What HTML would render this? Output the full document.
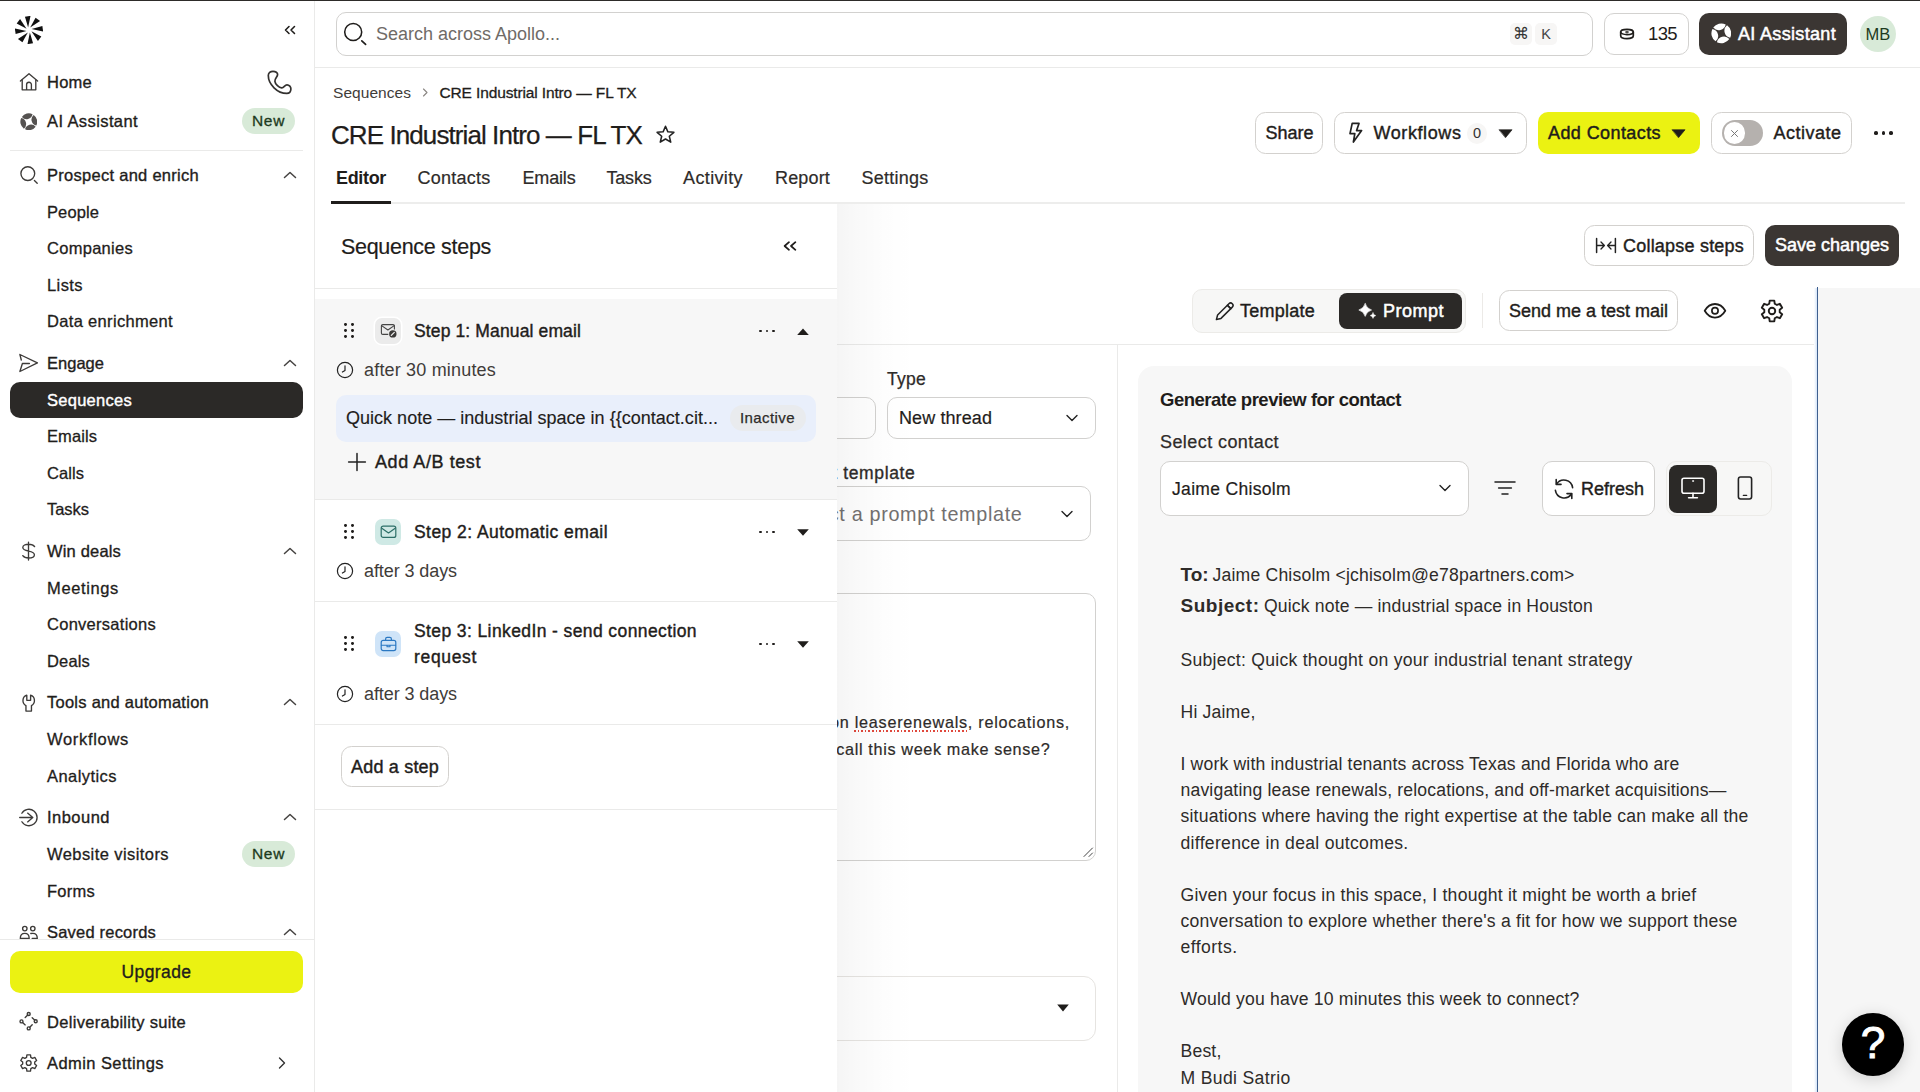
<!DOCTYPE html>
<html lang="en"><head><meta charset="utf-8"><title>CRE Industrial Intro — FL TX - Apollo</title><style>
*{box-sizing:border-box;margin:0;padding:0}
html,body{width:1920px;height:1092px;overflow:hidden;background:#fff}
body{position:relative;font-family:"Liberation Sans",sans-serif;color:#1f1d1b;-webkit-font-smoothing:antialiased}
div,svg,span.t{position:absolute}
span.t{white-space:nowrap;display:block}
</style></head>
<body>
<div style="left:0px;top:0px;width:1920px;height:1.4px;background:#2d2b29;z-index:50"></div>
<div style="left:0px;top:0px;width:314.7px;height:1092px;background:#fff;border-right:1px solid #eaeae9"></div>
<div style="left:314px;top:67px;width:1606px;height:1px;background:#eaeae9"></div>
<svg style="left:14.7px;top:16px;" width="28" height="28" viewBox="0 0 28 28" fill="none" stroke="#1f1d1b" stroke-width="1.5" stroke-linecap="round" stroke-linejoin="round"><path d="M13.3 11.4 L10.9 0.4 L16.5 0 Z" transform="rotate(-4 14 14)" fill="#111" stroke="none"/><path d="M13.3 11.4 L10.9 0.4 L16.5 0 Z" transform="rotate(41 14 14)" fill="#111" stroke="none"/><path d="M13.3 11.4 L10.9 0.4 L16.5 0 Z" transform="rotate(86 14 14)" fill="#111" stroke="none"/><path d="M13.3 11.4 L10.9 0.4 L16.5 0 Z" transform="rotate(131 14 14)" fill="#111" stroke="none"/><path d="M13.3 11.4 L10.9 0.4 L16.5 0 Z" transform="rotate(176 14 14)" fill="#111" stroke="none"/><path d="M13.3 11.4 L10.9 0.4 L16.5 0 Z" transform="rotate(221 14 14)" fill="#111" stroke="none"/><path d="M13.3 11.4 L10.9 0.4 L16.5 0 Z" transform="rotate(266 14 14)" fill="#111" stroke="none"/><path d="M13.3 11.4 L10.9 0.4 L16.5 0 Z" transform="rotate(311 14 14)" fill="#111" stroke="none"/></svg>
<svg style="left:283px;top:24px;" width="14" height="12" viewBox="0 0 14 12" fill="none" stroke="#1f1d1b" stroke-width="1.5" stroke-linecap="round" stroke-linejoin="round"><path d="M6 2.5 L2.5 6 L6 9.5 M11.5 2.5 L8 6 L11.5 9.5" stroke-width="1.55"/></svg>
<svg style="left:19px;top:72px;" width="20" height="20" viewBox="0 0 20 20" fill="none" stroke="#1f1d1b" stroke-width="1.5" stroke-linecap="round" stroke-linejoin="round"><path d="M1.4 9 L10 1.8 L18.6 9" stroke="#3d3b39" stroke-width="1.35"/><path d="M3.2 8 V17.8 H16.8 V8" stroke="#3d3b39" stroke-width="1.35"/><path d="M7.6 17.4 V12.6 a2.4 2.4 0 0 1 4.8 0 V17.4" stroke="#3d3b39" stroke-width="1.35"/></svg>
<span class="t" id="t1" style="top:71.1px;line-height:23px;font-size:16.5px;font-weight:400;color:#1f1d1b;left:47px;letter-spacing:0.246px;-webkit-text-stroke:0.35px #1f1d1b;">Home</span>
<svg style="left:266px;top:70px;" width="26" height="26" viewBox="0 0 26 26" fill="none" stroke="#1f1d1b" stroke-width="1.5" stroke-linecap="round" stroke-linejoin="round"><path d="M7 1.3 C9.6 1.3 11.8 2.8 11.6 4.7 C11.4 7 8.6 8.6 8.9 11.3 C9.3 14.5 13 17.7 15.7 17.9 C18 18.1 18.6 14.8 21 14.8 C23.2 14.8 25 17 24.9 19 C24.8 21.6 23.4 23.4 20.8 23.4 C11.4 23.4 2.3 14.4 2.3 5.6 C2.3 3 4.4 1.3 7 1.3 Z" stroke="#33312f" stroke-width="1.7"/></svg>
<svg style="left:19.9px;top:112.7px;" width="17.6" height="17.6" viewBox="0 0 20 20" fill="none" stroke="#1f1d1b" stroke-width="1.5" stroke-linecap="round" stroke-linejoin="round"><path d="M15.57 2.18 A9.6 9.6 0 0 1 18.59 14.28 A6.9 6.9 0 0 1 15.57 2.18 Z M17.82 15.57 A9.6 9.6 0 0 1 5.72 18.59 A6.9 6.9 0 0 1 17.82 15.57 Z M4.43 17.82 A9.6 9.6 0 0 1 1.41 5.72 A6.9 6.9 0 0 1 4.43 17.82 Z M2.18 4.43 A9.6 9.6 0 0 1 14.28 1.41 A6.9 6.9 0 0 1 2.18 4.43 Z " fill="#555250" stroke="none"/></svg>
<span class="t" id="t2" style="top:110.1px;line-height:23px;font-size:16.5px;font-weight:400;color:#1f1d1b;left:47px;letter-spacing:0.399px;-webkit-text-stroke:0.35px #1f1d1b;">AI Assistant</span>
<div style="left:242px;top:108px;width:53px;height:26px;background:#d8ead8;border-radius:13px"></div>
<span class="t" id="t3" style="top:110.0px;line-height:22px;font-size:15.5px;font-weight:400;color:#1d3a20;left:268.5px;transform:translateX(-50%);letter-spacing:0.661px;-webkit-text-stroke:0.3px #1d3a20;">New</span>
<div style="left:10px;top:150.2px;width:293px;height:1.2px;background:#eaeae9"></div>
<svg style="left:19px;top:165px;" width="20" height="20" viewBox="0 0 20 20" fill="none" stroke="#1f1d1b" stroke-width="1.5" stroke-linecap="round" stroke-linejoin="round"><circle cx="8.8" cy="8.6" r="6.9" stroke="#3d3b39" stroke-width="1.35"/><path d="M15.4 15.4 L18.2 18.2" stroke="#3d3b39" stroke-width="1.35"/></svg>
<span class="t" id="t4" style="top:164.1px;line-height:23px;font-size:16.5px;font-weight:400;color:#1f1d1b;left:47px;letter-spacing:0.276px;-webkit-text-stroke:0.35px #1f1d1b;">Prospect and enrich</span>
<svg style="left:283px;top:170.7px;" width="14" height="8" viewBox="0 0 14 8" fill="none" stroke="#1f1d1b" stroke-width="1.5" stroke-linecap="round" stroke-linejoin="round"><path d="M1.5 6.5 L7 1.5 L12.5 6.5" stroke-width="1.5" stroke="#454341"/></svg>
<span class="t" id="t5" style="top:200.6px;line-height:23px;font-size:16.5px;font-weight:400;color:#1f1d1b;left:47px;letter-spacing:0.102px;-webkit-text-stroke:0.3px #1f1d1b;">People</span>
<span class="t" id="t6" style="top:237.1px;line-height:23px;font-size:16.5px;font-weight:400;color:#1f1d1b;left:47px;letter-spacing:0.281px;-webkit-text-stroke:0.3px #1f1d1b;">Companies</span>
<span class="t" id="t7" style="top:273.6px;line-height:23px;font-size:16.5px;font-weight:400;color:#1f1d1b;left:47px;letter-spacing:0.412px;-webkit-text-stroke:0.3px #1f1d1b;">Lists</span>
<span class="t" id="t8" style="top:310.1px;line-height:23px;font-size:16.5px;font-weight:400;color:#1f1d1b;left:47px;letter-spacing:0.329px;-webkit-text-stroke:0.3px #1f1d1b;">Data enrichment</span>
<svg style="left:19px;top:353px;" width="20" height="20" viewBox="0 0 20 20" fill="none" stroke="#1f1d1b" stroke-width="1.5" stroke-linecap="round" stroke-linejoin="round"><path d="M2.3 7 L0.9 1.5 L18.4 9.9 L0.9 18.5 L3.4 10.5 H10.4" stroke="#3d3b39" stroke-width="1.35"/></svg>
<span class="t" id="t9" style="top:352.1px;line-height:23px;font-size:16.5px;font-weight:400;color:#1f1d1b;left:47px;letter-spacing:0.018px;-webkit-text-stroke:0.35px #1f1d1b;">Engage</span>
<svg style="left:283px;top:358.7px;" width="14" height="8" viewBox="0 0 14 8" fill="none" stroke="#1f1d1b" stroke-width="1.5" stroke-linecap="round" stroke-linejoin="round"><path d="M1.5 6.5 L7 1.5 L12.5 6.5" stroke-width="1.5" stroke="#454341"/></svg>
<div style="left:10px;top:381.5px;width:293px;height:36px;background:#2b2927;border-radius:10px"></div>
<span class="t" id="t10" style="top:388.6px;line-height:23px;font-size:16.5px;font-weight:400;color:#fff;left:47px;letter-spacing:0.269px;-webkit-text-stroke:0.4px #fff;">Sequences</span>
<span class="t" id="t11" style="top:425.1px;line-height:23px;font-size:16.5px;font-weight:400;color:#1f1d1b;left:47px;letter-spacing:0.081px;-webkit-text-stroke:0.3px #1f1d1b;">Emails</span>
<span class="t" id="t12" style="top:461.6px;line-height:23px;font-size:16.5px;font-weight:400;color:#1f1d1b;left:47px;letter-spacing:0.065px;-webkit-text-stroke:0.3px #1f1d1b;">Calls</span>
<span class="t" id="t13" style="top:498.1px;line-height:23px;font-size:16.5px;font-weight:400;color:#1f1d1b;left:47px;letter-spacing:-0.037px;-webkit-text-stroke:0.3px #1f1d1b;">Tasks</span>
<svg style="left:19px;top:541px;" width="20" height="20" viewBox="0 0 20 20" fill="none" stroke="#1f1d1b" stroke-width="1.5" stroke-linecap="round" stroke-linejoin="round"><path d="M15.6 5.6 C14.4 3.8 12.2 3.2 9.6 3.2 C6.5 3.2 3.8 4.3 3.8 6.5 C3.8 8.9 6.7 9.5 9.6 10.1 C12.5 10.7 15.4 11.3 15.4 13.7 C15.4 15.9 12.7 17 9.6 17 C7.4 17 5 16.4 3.8 14.6 M9.5 1.2 V19" stroke="#3d3b39" stroke-width="1.35"/></svg>
<span class="t" id="t14" style="top:540.1px;line-height:23px;font-size:16.5px;font-weight:400;color:#1f1d1b;left:47px;letter-spacing:0.172px;-webkit-text-stroke:0.35px #1f1d1b;">Win deals</span>
<svg style="left:283px;top:546.7px;" width="14" height="8" viewBox="0 0 14 8" fill="none" stroke="#1f1d1b" stroke-width="1.5" stroke-linecap="round" stroke-linejoin="round"><path d="M1.5 6.5 L7 1.5 L12.5 6.5" stroke-width="1.5" stroke="#454341"/></svg>
<span class="t" id="t15" style="top:576.6px;line-height:23px;font-size:16.5px;font-weight:400;color:#1f1d1b;left:47px;letter-spacing:0.631px;-webkit-text-stroke:0.3px #1f1d1b;">Meetings</span>
<span class="t" id="t16" style="top:613.1px;line-height:23px;font-size:16.5px;font-weight:400;color:#1f1d1b;left:47px;letter-spacing:0.271px;-webkit-text-stroke:0.3px #1f1d1b;">Conversations</span>
<span class="t" id="t17" style="top:649.6px;line-height:23px;font-size:16.5px;font-weight:400;color:#1f1d1b;left:47px;letter-spacing:0.163px;-webkit-text-stroke:0.3px #1f1d1b;">Deals</span>
<svg style="left:19px;top:692px;" width="20" height="20" viewBox="0 0 20 20" fill="none" stroke="#1f1d1b" stroke-width="1.5" stroke-linecap="round" stroke-linejoin="round"><path d="M11.6 3.2 A5.7 5.7 0 0 1 12.45 13.6 V19.1 H6.95 V13.6 A5.7 5.7 0 0 1 7.8 3.2 V8.3 H11.6 Z" stroke="#3d3b39" stroke-width="1.35"/></svg>
<span class="t" id="t18" style="top:691.1px;line-height:23px;font-size:16.5px;font-weight:400;color:#1f1d1b;left:47px;letter-spacing:0.257px;-webkit-text-stroke:0.35px #1f1d1b;">Tools and automation</span>
<svg style="left:283px;top:697.7px;" width="14" height="8" viewBox="0 0 14 8" fill="none" stroke="#1f1d1b" stroke-width="1.5" stroke-linecap="round" stroke-linejoin="round"><path d="M1.5 6.5 L7 1.5 L12.5 6.5" stroke-width="1.5" stroke="#454341"/></svg>
<span class="t" id="t19" style="top:728.1px;line-height:23px;font-size:16.5px;font-weight:400;color:#1f1d1b;left:47px;letter-spacing:0.689px;-webkit-text-stroke:0.3px #1f1d1b;">Workflows</span>
<span class="t" id="t20" style="top:764.6px;line-height:23px;font-size:16.5px;font-weight:400;color:#1f1d1b;left:47px;letter-spacing:0.441px;-webkit-text-stroke:0.3px #1f1d1b;">Analytics</span>
<svg style="left:19px;top:807px;" width="20" height="20" viewBox="0 0 20 20" fill="none" stroke="#1f1d1b" stroke-width="1.5" stroke-linecap="round" stroke-linejoin="round"><path d="M2.87 6.25 A8.2 8.2 0 1 1 2.87 14.75 M0.7 10.5 H13.6 M8.6 6.1 L13.8 10.5 L8.6 14.9" stroke="#3d3b39" stroke-width="1.35"/></svg>
<span class="t" id="t21" style="top:806.1px;line-height:23px;font-size:16.5px;font-weight:400;color:#1f1d1b;left:47px;letter-spacing:0.478px;-webkit-text-stroke:0.35px #1f1d1b;">Inbound</span>
<svg style="left:283px;top:812.7px;" width="14" height="8" viewBox="0 0 14 8" fill="none" stroke="#1f1d1b" stroke-width="1.5" stroke-linecap="round" stroke-linejoin="round"><path d="M1.5 6.5 L7 1.5 L12.5 6.5" stroke-width="1.5" stroke="#454341"/></svg>
<span class="t" id="t22" style="top:843.1px;line-height:23px;font-size:16.5px;font-weight:400;color:#1f1d1b;left:47px;letter-spacing:0.423px;-webkit-text-stroke:0.3px #1f1d1b;">Website visitors</span>
<div style="left:242px;top:841px;width:53px;height:26px;background:#d8ead8;border-radius:13px"></div>
<span class="t" id="t23" style="top:843.0px;line-height:22px;font-size:15.5px;font-weight:400;color:#1d3a20;left:268.5px;transform:translateX(-50%);letter-spacing:0.661px;-webkit-text-stroke:0.3px #1d3a20;">New</span>
<span class="t" id="t24" style="top:879.6px;line-height:23px;font-size:16.5px;font-weight:400;color:#1f1d1b;left:47px;letter-spacing:0.250px;-webkit-text-stroke:0.3px #1f1d1b;">Forms</span>
<svg style="left:19px;top:922px;" width="20" height="20" viewBox="0 0 20 20" fill="none" stroke="#1f1d1b" stroke-width="1.5" stroke-linecap="round" stroke-linejoin="round"><circle cx="5.8" cy="6.6" r="2.2" stroke="#3d3b39" stroke-width="1.35"/><circle cx="13.8" cy="6.6" r="2.2" stroke="#3d3b39" stroke-width="1.35"/><path d="M1.3 16.4 C1.3 13.4 3 11.3 5.8 11.3 C8.6 11.3 10.2 13.4 10.2 16.4 Z M11.8 11.5 C12.4 11.3 13 11.3 13.8 11.3 C16.6 11.3 18.3 13.4 18.3 16.4 H13.2" stroke="#3d3b39" stroke-width="1.35"/></svg>
<span class="t" id="t25" style="top:921.1px;line-height:23px;font-size:16.5px;font-weight:400;color:#1f1d1b;left:47px;letter-spacing:0.200px;-webkit-text-stroke:0.35px #1f1d1b;">Saved records</span>
<svg style="left:283px;top:927.7px;" width="14" height="8" viewBox="0 0 14 8" fill="none" stroke="#1f1d1b" stroke-width="1.5" stroke-linecap="round" stroke-linejoin="round"><path d="M1.5 6.5 L7 1.5 L12.5 6.5" stroke-width="1.5" stroke="#454341"/></svg>
<div style="left:0px;top:939px;width:313.7px;height:153px;background:#fff;border-top:1px solid #eaeae9"></div>
<div style="left:10px;top:951px;width:293px;height:42px;background:#ebf212;border-radius:10px"></div>
<span class="t" id="t26" style="top:960.0px;line-height:24px;font-size:17.5px;font-weight:400;color:#1f1d1b;left:156.5px;transform:translateX(-50%);letter-spacing:0.408px;-webkit-text-stroke:0.35px #1f1d1b;">Upgrade</span>
<svg style="left:19px;top:1011px;" width="20" height="20" viewBox="0 0 20 20" fill="none" stroke="#1f1d1b" stroke-width="1.5" stroke-linecap="round" stroke-linejoin="round"><circle cx="9.7" cy="3" r="1.5" stroke="#3d3b39" stroke-width="1.35"/><circle cx="16.7" cy="10.2" r="1.5" stroke="#3d3b39" stroke-width="1.35"/><circle cx="9.7" cy="17.4" r="1.5" stroke="#3d3b39" stroke-width="1.35"/><circle cx="2.5" cy="10.4" r="1.5" stroke="#3d3b39" stroke-width="1.35"/><path d="M8.7 4.1 L6.2 6.6 M15.6 9.1 L13.2 6.8 M10.8 16.3 L13.2 13.8 M3.6 11.5 L6.2 13.9" stroke="#3d3b39" stroke-width="1.35"/></svg>
<span class="t" id="t27" style="top:1010.6px;line-height:23px;font-size:16.5px;font-weight:400;color:#1f1d1b;left:47px;letter-spacing:0.301px;-webkit-text-stroke:0.35px #1f1d1b;">Deliverability suite</span>
<svg style="left:19px;top:1053px;" width="20" height="20" viewBox="0 0 20 20" fill="none" stroke="#1f1d1b" stroke-width="1.5" stroke-linecap="round" stroke-linejoin="round"><path d="M11.84 4.29 L11.50 1.90 L7.90 1.90 L7.56 4.29 L5.82 5.29 L3.58 4.39 L1.78 7.50 L3.68 8.99 L3.68 11.01 L1.78 12.50 L3.58 15.61 L5.82 14.71 L7.56 15.71 L7.90 18.10 L11.50 18.10 L11.84 15.71 L13.58 14.71 L15.82 15.61 L17.62 12.50 L15.72 11.01 L15.72 8.99 L17.62 7.50 L15.82 4.39 L13.58 5.29 Z" stroke="#3d3b39" stroke-width="1.35"/><circle cx="9.7" cy="10" r="2.4" stroke="#3d3b39" stroke-width="1.35"/></svg>
<span class="t" id="t28" style="top:1052.1px;line-height:23px;font-size:16.5px;font-weight:400;color:#1f1d1b;left:47px;letter-spacing:0.430px;-webkit-text-stroke:0.35px #1f1d1b;">Admin Settings</span>
<svg style="left:277px;top:1056px;" width="10" height="14" viewBox="0 0 10 14" fill="none" stroke="#1f1d1b" stroke-width="1.5" stroke-linecap="round" stroke-linejoin="round"><path d="M2.5 2 L7.5 7 L2.5 12" stroke-width="1.4" stroke="#333"/></svg>
<div style="left:336px;top:12px;width:1257px;height:43.5px;border:1px solid #d2d1cf;border-radius:10px;background:#fff"></div>
<svg style="left:342px;top:21px;" width="26" height="26" viewBox="0 0 26 26" fill="none" stroke="#1f1d1b" stroke-width="1.5" stroke-linecap="round" stroke-linejoin="round"><circle cx="11.2" cy="11" r="8.5" stroke="#1f1d1b" stroke-width="1.55"/><path d="M19.8 19.8 L23.6 23.4" stroke="#1f1d1b" stroke-width="1.7"/></svg>
<span class="t" id="t29" style="top:22.3px;line-height:25px;font-size:18px;font-weight:400;color:#6f6b67;left:376px;letter-spacing:-0.004px;">Search across Apollo...</span>
<div style="left:1510px;top:23px;width:22px;height:22px;background:#f7f6f5;border-radius:5px"></div>
<span class="t" id="t30" style="top:23.0px;line-height:22px;font-size:16px;font-weight:400;color:#333;left:1521px;transform:translateX(-50%);font-family:"DejaVu Sans",sans-serif;">⌘</span>
<div style="left:1535px;top:23px;width:22px;height:22px;background:#f7f6f5;border-radius:5px"></div>
<span class="t" id="t31" style="top:24.0px;line-height:20px;font-size:14.5px;font-weight:400;color:#444;left:1546px;transform:translateX(-50%);">K</span>
<div style="left:1603.5px;top:13px;width:85px;height:41.5px;border:1.3px solid #d3d2d0;border-radius:10px;background:#fff"></div>
<svg style="left:1618.7px;top:26px;" width="16" height="15" viewBox="0 0 16 15" fill="none" stroke="#1f1d1b" stroke-width="1.5" stroke-linecap="round" stroke-linejoin="round"><ellipse cx="8" cy="6" rx="6.3" ry="2.6" stroke="#1f1d1b" stroke-width="1.7"/><path d="M1.7 6 V9.7 C1.7 11.5 4.5 12.6 8 12.6 C11.5 12.6 14.3 11.5 14.3 9.7 V6" stroke="#1f1d1b" stroke-width="1.7"/><path d="M6.5 6 H9.5 M8 5.1 V6.9" stroke="#1f1d1b" stroke-width="1.1"/></svg>
<span class="t" id="t32" style="top:21.0px;line-height:26px;font-size:18.5px;font-weight:400;color:#1f1d1b;left:1648px;letter-spacing:-0.625px;">135</span>
<div style="left:1699px;top:13px;width:148px;height:41.5px;background:#3b3633;border-radius:10px"></div>
<svg style="left:1710.8px;top:23.4px;" width="20.6" height="20.6" viewBox="0 0 20 20" fill="none" stroke="#1f1d1b" stroke-width="1.5" stroke-linecap="round" stroke-linejoin="round"><path d="M15.57 2.18 A9.6 9.6 0 0 1 18.59 14.28 A6.9 6.9 0 0 1 15.57 2.18 Z M17.82 15.57 A9.6 9.6 0 0 1 5.72 18.59 A6.9 6.9 0 0 1 17.82 15.57 Z M4.43 17.82 A9.6 9.6 0 0 1 1.41 5.72 A6.9 6.9 0 0 1 4.43 17.82 Z M2.18 4.43 A9.6 9.6 0 0 1 14.28 1.41 A6.9 6.9 0 0 1 2.18 4.43 Z " fill="#fff" stroke="none"/></svg>
<span class="t" id="t33" style="top:21.5px;line-height:25px;font-size:18px;font-weight:400;color:#fff;left:1738px;letter-spacing:0.329px;-webkit-text-stroke:0.5px #fff;">AI Assistant</span>
<div style="left:1860px;top:16px;width:36px;height:36px;background:#d8ead8;border-radius:50%"></div>
<span class="t" id="t34" style="top:23.0px;line-height:23px;font-size:16.5px;font-weight:400;color:#1d3a20;left:1878px;transform:translateX(-50%);letter-spacing:0.125px;">MB</span>
<span class="t" id="t35" style="top:81.5px;line-height:22px;font-size:15.5px;font-weight:400;color:#3f3c39;left:333px;letter-spacing:0.049px;">Sequences</span>
<svg style="left:421px;top:87px;" width="8" height="11" viewBox="0 0 8 11" fill="none" stroke="#1f1d1b" stroke-width="1.5" stroke-linecap="round" stroke-linejoin="round"><path d="M2.5 2 L6 5.5 L2.5 9" stroke="#8a8682" stroke-width="1.1"/></svg>
<span class="t" id="t36" style="top:81.5px;line-height:22px;font-size:15.5px;font-weight:400;color:#1f1d1b;left:439.5px;letter-spacing:-0.133px;-webkit-text-stroke:0.3px #1f1d1b;">CRE Industrial Intro — FL TX</span>
<span class="t" id="t37" style="top:116.5px;line-height:36px;font-size:26px;font-weight:400;color:#1f1d1b;left:331px;letter-spacing:-0.917px;-webkit-text-stroke:0.25px #1f1d1b;">CRE Industrial Intro — FL TX</span>
<svg style="left:655.3px;top:123.6px;" width="21" height="21" viewBox="0 0 22 22" fill="none" stroke="#1f1d1b" stroke-width="1.5" stroke-linecap="round" stroke-linejoin="round"><path d="M11 2.4 L13.5 8.2 L19.8 8.7 L15 12.8 L16.5 19 L11 15.7 L5.5 19 L7 12.8 L2.2 8.7 L8.5 8.2 Z" stroke="#222" stroke-width="1.6"/></svg>
<div style="left:1255.4px;top:112.2px;width:68px;height:41.5px;border:1.4px solid #d3d1ce;border-radius:10.5px;background:#fff"></div>
<span class="t" id="t38" style="top:120.5px;line-height:25px;font-size:18px;font-weight:400;color:#1f1d1b;left:1289.5px;transform:translateX(-50%);letter-spacing:-0.009px;-webkit-text-stroke:0.4px #1f1d1b;">Share</span>
<div style="left:1334.3px;top:112.2px;width:192.3px;height:41.5px;border:1.4px solid #d3d1ce;border-radius:10.5px;background:#fff"></div>
<svg style="left:1347px;top:121px;" width="18" height="24" viewBox="0 0 18 24" fill="none" stroke="#1f1d1b" stroke-width="1.5" stroke-linecap="round" stroke-linejoin="round"><path d="M5.2 2.4 H12 L9.6 9.6 H14.6 L6.4 21 L7.8 12.6 H3 Z" stroke="#222" stroke-width="1.7"/></svg>
<span class="t" id="t39" style="top:120.5px;line-height:25px;font-size:18px;font-weight:400;color:#1f1d1b;left:1373.5px;letter-spacing:0.590px;-webkit-text-stroke:0.4px #1f1d1b;">Workflows</span>
<div style="left:1467px;top:122.5px;width:20px;height:21px;background:#f7f6f5;border-radius:10px"></div>
<span class="t" id="t40" style="top:123.0px;line-height:20px;font-size:14.5px;font-weight:400;color:#333;left:1477px;transform:translateX(-50%);">0</span>
<svg style="left:1497.5px;top:128.3px;" width="15.4" height="11" viewBox="0 0 14 10" fill="none" stroke="#1f1d1b" stroke-width="1.5" stroke-linecap="round" stroke-linejoin="round"><path d="M1.2 1.6 H12.8 L7 8.6 Z" fill="#1f1d1b" stroke="#1f1d1b" stroke-width="0.6"/></svg>
<div style="left:1537.5px;top:112.3px;width:162.5px;height:41.5px;background:#ebf212;border-radius:10px"></div>
<span class="t" id="t41" style="top:120.5px;line-height:25px;font-size:18px;font-weight:400;color:#1f1d1b;left:1548px;letter-spacing:0.411px;-webkit-text-stroke:0.45px #1f1d1b;">Add Contacts</span>
<svg style="left:1670.5px;top:128.3px;" width="15.4" height="11" viewBox="0 0 14 10" fill="none" stroke="#1f1d1b" stroke-width="1.5" stroke-linecap="round" stroke-linejoin="round"><path d="M1.2 1.6 H12.8 L7 8.6 Z" fill="#1f1d1b" stroke="#1f1d1b" stroke-width="0.6"/></svg>
<div style="left:1711.3px;top:112.2px;width:141px;height:41.5px;border:1.4px solid #d3d1ce;border-radius:10.5px;background:#fff"></div>
<div style="left:1721.8px;top:120.4px;width:41px;height:25.4px;background:#b5b1ae;border-radius:13px"></div>
<div style="left:1723.8px;top:122.4px;width:21.4px;height:21.4px;background:#fff;border-radius:50%"></div>
<svg style="left:1729px;top:127.6px;" width="11" height="11" viewBox="0 0 11 11" fill="none" stroke="#1f1d1b" stroke-width="1.5" stroke-linecap="round" stroke-linejoin="round"><path d="M2.5 2.5 L8.5 8.5 M8.5 2.5 L2.5 8.5" stroke="#777" stroke-width="1"/></svg>
<span class="t" id="t42" style="top:120.5px;line-height:25px;font-size:18px;font-weight:400;color:#1f1d1b;left:1773.5px;letter-spacing:0.496px;-webkit-text-stroke:0.4px #1f1d1b;">Activate</span>
<div style="left:1874.2px;top:131.1px;width:3.7px;height:3.7px;background:#1f1d1b;border-radius:50%"></div>
<div style="left:1881.7px;top:131.1px;width:3.7px;height:3.7px;background:#1f1d1b;border-radius:50%"></div>
<div style="left:1889.2px;top:131.1px;width:3.7px;height:3.7px;background:#1f1d1b;border-radius:50%"></div>
<div style="left:331px;top:202.3px;width:1574px;height:1.6px;background:#ededec"></div>
<div style="left:331px;top:200.7px;width:60px;height:3.2px;background:#1f1d1b"></div>
<span class="t" id="t43" style="top:165.5px;line-height:25px;font-size:18px;font-weight:700;color:#1f1d1b;left:336px;letter-spacing:-0.333px;">Editor</span>
<span class="t" id="t44" style="top:165.5px;line-height:25px;font-size:18px;font-weight:400;color:#2e2b29;left:417.5px;letter-spacing:0.244px;-webkit-text-stroke:0.2px #2e2b29;">Contacts</span>
<span class="t" id="t45" style="top:165.5px;line-height:25px;font-size:18px;font-weight:400;color:#2e2b29;left:522.5px;letter-spacing:-0.169px;-webkit-text-stroke:0.2px #2e2b29;">Emails</span>
<span class="t" id="t46" style="top:165.5px;line-height:25px;font-size:18px;font-weight:400;color:#2e2b29;left:606.5px;letter-spacing:-0.203px;-webkit-text-stroke:0.2px #2e2b29;">Tasks</span>
<span class="t" id="t47" style="top:165.5px;line-height:25px;font-size:18px;font-weight:400;color:#2e2b29;left:683px;letter-spacing:0.373px;-webkit-text-stroke:0.2px #2e2b29;">Activity</span>
<span class="t" id="t48" style="top:165.5px;line-height:25px;font-size:18px;font-weight:400;color:#2e2b29;left:775px;letter-spacing:0.161px;-webkit-text-stroke:0.2px #2e2b29;">Report</span>
<span class="t" id="t49" style="top:165.5px;line-height:25px;font-size:18px;font-weight:400;color:#2e2b29;left:861.5px;letter-spacing:0.244px;-webkit-text-stroke:0.2px #2e2b29;">Settings</span>
<div style="left:1818px;top:288px;width:102px;height:804px;background:#f6f6f6"></div>
<div style="left:1814.3px;top:288px;width:3px;height:804px;background:linear-gradient(90deg,#fff,#d4e4f8)"></div>
<div style="left:1817.1px;top:287.3px;width:1.1px;height:805px;background:#3f5f8e"></div>
<div style="left:1583.5px;top:224.5px;width:170.3px;height:41.5px;border:1.4px solid #d3d1ce;border-radius:10.5px;background:#fff"></div>
<svg style="left:1595px;top:237px;" width="22" height="17" viewBox="0 0 22 17" fill="none" stroke="#1f1d1b" stroke-width="1.5" stroke-linecap="round" stroke-linejoin="round"><path d="M1.6 1.5 V15.5 M20.4 1.5 V15.5" stroke="#222" stroke-width="1.5"/><path d="M1.6 8.5 H9.2 M6 5 L9.4 8.5 L6 12 M20.4 8.5 H12.8 M16 5 L12.6 8.5 L16 12" stroke="#222" stroke-width="1.3"/></svg>
<span class="t" id="t50" style="top:233.5px;line-height:25px;font-size:18px;font-weight:400;color:#1f1d1b;left:1623px;letter-spacing:0.209px;-webkit-text-stroke:0.4px #1f1d1b;">Collapse steps</span>
<div style="left:1764.5px;top:224.5px;width:134.5px;height:41.5px;background:#3b3633;border-radius:10px"></div>
<span class="t" id="t51" style="top:233.0px;line-height:25px;font-size:18px;font-weight:400;color:#fff;left:1832px;transform:translateX(-50%);letter-spacing:-0.008px;-webkit-text-stroke:0.5px #fff;">Save changes</span>
<div style="left:1192px;top:289px;width:274px;height:44px;background:#f7f7f6;border:1px solid #ecebe8;border-radius:10px"></div>
<svg style="left:1213.5px;top:300px;" width="22" height="22" viewBox="0 0 22 22" fill="none" stroke="#1f1d1b" stroke-width="1.5" stroke-linecap="round" stroke-linejoin="round"><path d="M2.4 19.6 L3.6 15 L13.4 5.2 L16.8 8.6 L7 18.4 Z" stroke="#222" stroke-width="1.5"/><path d="M14.9 3.7 a2.4 2.4 0 0 1 3.4 3.4 L16.8 8.6 L13.4 5.2 Z" stroke="#222" stroke-width="1.5"/></svg>
<span class="t" id="t52" style="top:298.5px;line-height:25px;font-size:18px;font-weight:400;color:#1f1d1b;left:1240px;letter-spacing:0.244px;-webkit-text-stroke:0.4px #1f1d1b;">Template</span>
<div style="left:1338.8px;top:292.5px;width:123.4px;height:36.4px;background:#2b2927;border-radius:8px"></div>
<svg style="left:1355px;top:300px;" width="24" height="24" viewBox="0 0 24 24" fill="none" stroke="#1f1d1b" stroke-width="1.5" stroke-linecap="round" stroke-linejoin="round"><path d="M10.2 3.5999999999999996 Q11.61 8.59 16.6 10 Q11.61 11.41 10.2 16.4 Q8.79 11.41 3.799999999999999 10 Q8.79 8.59 10.2 3.5999999999999996 Z" fill="#fff" stroke="#fff" stroke-width="0.6"/><path d="M18 12.7 Q18.58 15.02 20.9 15.6 Q18.58 16.18 18 18.5 Q17.42 16.18 15.1 15.6 Q17.42 15.02 18 12.7 Z" fill="#fff" stroke="#fff" stroke-width="0.4"/></svg>
<span class="t" id="t53" style="top:298.5px;line-height:25px;font-size:18px;font-weight:400;color:#fff;left:1383px;letter-spacing:0.495px;-webkit-text-stroke:0.5px #fff;">Prompt</span>
<div style="left:1482px;top:293px;width:1px;height:35px;background:#eceae7"></div>
<div style="left:1498.5px;top:289.5px;width:179.5px;height:41.5px;border:1.4px solid #d3d1ce;border-radius:10.5px;background:#fff"></div>
<span class="t" id="t54" style="top:298.5px;line-height:25px;font-size:18px;font-weight:400;color:#1f1d1b;left:1588.5px;transform:translateX(-50%);letter-spacing:-0.004px;-webkit-text-stroke:0.4px #1f1d1b;">Send me a test mail</span>
<svg style="left:1702px;top:299px;" width="26" height="24" viewBox="0 0 26 24" fill="none" stroke="#1f1d1b" stroke-width="1.5" stroke-linecap="round" stroke-linejoin="round"><path d="M2.7 11.8 C5.4 7.2 9 5 13 5 C17 5 20.6 7.2 23.3 11.8 C20.6 16.4 17 18.6 13 18.6 C9 18.6 5.4 16.4 2.7 11.8 Z" stroke="#1f1d1b" stroke-width="1.8"/><circle cx="13" cy="11.8" r="3.1" stroke="#1f1d1b" stroke-width="1.7"/></svg>
<svg style="left:1759.3px;top:297.8px;" width="26" height="26" viewBox="0 0 20 20" fill="none" stroke="#1f1d1b" stroke-width="1.5" stroke-linecap="round" stroke-linejoin="round"><path d="M12.10 4.38 L11.77 1.99 L8.23 1.99 L7.90 4.38 L6.18 5.37 L3.95 4.46 L2.18 7.53 L4.08 9.01 L4.08 10.99 L2.18 12.47 L3.95 15.54 L6.18 14.63 L7.90 15.62 L8.23 18.01 L11.77 18.01 L12.10 15.62 L13.82 14.63 L16.05 15.54 L17.82 12.47 L15.92 10.99 L15.92 9.01 L17.82 7.53 L16.05 4.46 L13.82 5.37 Z" stroke="#1f1d1b" stroke-width="1.45"/><circle cx="10" cy="10" r="2.5" stroke="#1f1d1b" stroke-width="1.45"/></svg>
<div style="left:837px;top:344px;width:977px;height:1px;background:#eaeae9"></div>
<div style="left:1117px;top:345px;width:1px;height:747px;background:#eaeae9"></div>
<span class="t" id="t55" style="top:366.5px;line-height:24px;font-size:17.5px;font-weight:400;color:#2e2b29;left:887px;letter-spacing:0.262px;-webkit-text-stroke:0.25px #2e2b29;">Type</span>
<div style="left:700px;top:396.5px;width:175.5px;height:42px;border:1px solid #d2d1cf;border-radius:10px;background:#fff"></div>
<div style="left:886.5px;top:396.5px;width:209px;height:42px;border:1px solid #d2d1cf;border-radius:10px;background:#fff"></div>
<span class="t" id="t56" style="top:405.5px;line-height:25px;font-size:18px;font-weight:400;color:#1f1d1b;left:899px;letter-spacing:0.094px;-webkit-text-stroke:0.2px #1f1d1b;">New thread</span>
<svg style="left:1065px;top:413px;" width="14" height="10" viewBox="0 0 14 10" fill="none" stroke="#1f1d1b" stroke-width="1.5" stroke-linecap="round" stroke-linejoin="round"><path d="M2 2.4 L7 7.4 L12 2.4" stroke="#222" stroke-width="1.4"/></svg>
<span class="t" id="t57" style="top:460.5px;line-height:24px;font-size:17.5px;font-weight:400;color:#2e2b29;right:1004.5px;letter-spacing:0.640px;-webkit-text-stroke:0.35px #2e2b29;">Prompt template</span>
<div style="left:700px;top:486px;width:390.5px;height:55px;border:1px solid #d2d1cf;border-radius:10px;background:#fff"></div>
<span class="t" id="t58" style="top:500.0px;line-height:28px;font-size:19.8px;font-weight:400;color:#737070;right:897.5px;letter-spacing:0.671px;">Select a prompt template</span>
<svg style="left:1060px;top:509px;" width="14" height="10" viewBox="0 0 14 10" fill="none" stroke="#1f1d1b" stroke-width="1.5" stroke-linecap="round" stroke-linejoin="round"><path d="M2 2.4 L7 7.4 L12 2.4" stroke="#222" stroke-width="1.4"/></svg>
<div style="left:700px;top:593px;width:396px;height:267.5px;border:1px solid #d2d1cf;border-radius:10px;background:#fff"></div>
<span class="t" id="t59" style="top:710.0px;line-height:24px;font-size:16.2px;font-weight:400;color:#2e2b29;right:850px;letter-spacing:0.741px;-webkit-text-stroke:0.2px #2e2b29;">on leaserenewals, relocations,</span>
<div style="left:854px;top:730px;width:114.5px;height:1.5px;background:repeating-linear-gradient(90deg,#e0483c 0 1.6px,transparent 1.6px 3.6px)"></div>
<span class="t" id="t60" style="top:736.5px;line-height:24px;font-size:16.2px;font-weight:400;color:#2e2b29;right:869.7px;letter-spacing:0.652px;-webkit-text-stroke:0.2px #2e2b29;">call this week make sense?</span>
<svg style="left:1082px;top:846px;" width="12" height="12" viewBox="0 0 12 12" fill="none" stroke="#1f1d1b" stroke-width="1.5" stroke-linecap="round" stroke-linejoin="round"><path d="M10.5 2 L2 10.5 M10.5 7 L7 10.5" stroke="#444" stroke-width="1"/></svg>
<div style="left:700px;top:976px;width:396px;height:64.5px;border:1px solid #e6e4e1;border-radius:12px;background:#fff"></div>
<svg style="left:1056px;top:1003px;" width="14" height="10" viewBox="0 0 14 10" fill="none" stroke="#1f1d1b" stroke-width="1.5" stroke-linecap="round" stroke-linejoin="round"><path d="M1.2 1.6 H12.8 L7 8.6 Z" fill="#1f1d1b" stroke="none"/></svg>
<div style="left:1138.3px;top:366px;width:654px;height:760px;background:#f7f7f7;border-radius:16px"></div>
<span class="t" id="t61" style="top:386.8px;line-height:26px;font-size:18.5px;font-weight:700;color:#1f1d1b;left:1160px;letter-spacing:-0.499px;">Generate preview for contact</span>
<span class="t" id="t62" style="top:429.8px;line-height:25px;font-size:18px;font-weight:400;color:#2e2b29;left:1160px;letter-spacing:0.424px;-webkit-text-stroke:0.25px #2e2b29;">Select contact</span>
<div style="left:1159.5px;top:461px;width:309.3px;height:55px;border:1px solid #d2d1cf;border-radius:10px;background:#fff"></div>
<span class="t" id="t63" style="top:476.5px;line-height:24px;font-size:17.5px;font-weight:400;color:#1f1d1b;left:1172px;letter-spacing:0.326px;-webkit-text-stroke:0.2px #1f1d1b;">Jaime Chisolm</span>
<svg style="left:1438px;top:483px;" width="14" height="10" viewBox="0 0 14 10" fill="none" stroke="#1f1d1b" stroke-width="1.5" stroke-linecap="round" stroke-linejoin="round"><path d="M2 2.4 L7 7.4 L12 2.4" stroke="#222" stroke-width="1.4"/></svg>
<svg style="left:1493px;top:477.5px;" width="24" height="20" viewBox="0 0 24 20" fill="none" stroke="#1f1d1b" stroke-width="1.5" stroke-linecap="round" stroke-linejoin="round"><path d="M2 4 H22 M5.6 10 H18.4 M9 16 H15" stroke="#222" stroke-width="1.5"/></svg>
<div style="left:1541.5px;top:461px;width:113.2px;height:55px;border:1px solid #d2d1cf;border-radius:10px;background:#fff"></div>
<svg style="left:1552px;top:476.6px;" width="24" height="24" viewBox="0 0 24 24" fill="none" stroke="#1f1d1b" stroke-width="1.5" stroke-linecap="round" stroke-linejoin="round"><g transform="translate(24 0) scale(-1 1)"><path d="M3.4 10.6 A8.8 8.8 0 0 1 19.4 7 M20.6 13.4 A8.8 8.8 0 0 1 4.6 17" stroke="#222" stroke-width="1.6"/><path d="M19.8 2.6 V7.4 H15 M4.2 21.4 V16.6 H9" stroke="#222" stroke-width="1.6"/></g></svg>
<span class="t" id="t64" style="top:476.8px;line-height:25px;font-size:18px;font-weight:400;color:#1f1d1b;left:1581px;letter-spacing:-0.004px;-webkit-text-stroke:0.4px #1f1d1b;">Refresh</span>
<div style="left:1665.5px;top:461px;width:106px;height:55px;border:1px solid #ecebe8;border-radius:10px;background:#f7f7f6"></div>
<div style="left:1669px;top:465px;width:47.5px;height:47.5px;background:#2b2927;border-radius:8px"></div>
<svg style="left:1680px;top:476px;" width="26" height="24" viewBox="0 0 26 24" fill="none" stroke="#1f1d1b" stroke-width="1.5" stroke-linecap="round" stroke-linejoin="round"><rect x="2" y="2.2" width="22" height="15" rx="2" stroke="#fff" stroke-width="1.6"/><path d="M13 17.4 V21.4 M8.6 21.8 H17.4" stroke="#fff" stroke-width="1.6"/><circle cx="13" cy="5" r="0.6" fill="#fff" stroke="#fff" stroke-width="0.6"/></svg>
<svg style="left:1736px;top:475px;" width="18" height="26" viewBox="0 0 18 26" fill="none" stroke="#1f1d1b" stroke-width="1.5" stroke-linecap="round" stroke-linejoin="round"><rect x="2.4" y="2" width="13.2" height="22" rx="2.2" stroke="#222" stroke-width="1.6"/><path d="M7.4 20.4 H10.6" stroke="#222" stroke-width="1.4"/></svg>
<span class="t" id="t65" style="top:560.7px;line-height:27px;font-size:19px;font-weight:700;color:#2e2b29;left:1180.5px;letter-spacing:-0.047px;">To:</span>
<span class="t" id="t66" style="top:562.8px;line-height:25px;font-size:17.6px;font-weight:400;color:#2e2b29;left:1212.5px;letter-spacing:0.194px;">Jaime Chisolm &lt;jchisolm@e78partners.com&gt;</span>
<span class="t" id="t67" style="top:592.1px;line-height:27px;font-size:19px;font-weight:700;color:#2e2b29;left:1180.5px;letter-spacing:0.506px;">Subject:</span>
<span class="t" id="t68" style="top:594.2px;line-height:25px;font-size:17.6px;font-weight:400;color:#2e2b29;left:1264px;letter-spacing:0.157px;">Quick note — industrial space in Houston</span>
<span class="t" id="t69" style="top:647.8px;line-height:25px;font-size:17.6px;font-weight:400;color:#2e2b29;left:1180.5px;letter-spacing:0.260px;">Subject: Quick thought on your industrial tenant strategy</span>
<span class="t" id="t70" style="top:699.8px;line-height:25px;font-size:17.6px;font-weight:400;color:#2e2b29;left:1180.5px;letter-spacing:0.186px;">Hi Jaime,</span>
<span class="t" id="t71" style="top:752.3px;line-height:25px;font-size:17.6px;font-weight:400;color:#2e2b29;left:1180.5px;letter-spacing:0.165px;">I work with industrial tenants across Texas and Florida who are</span>
<span class="t" id="t72" style="top:778.3px;line-height:25px;font-size:17.6px;font-weight:400;color:#2e2b29;left:1180.5px;letter-spacing:0.167px;">navigating lease renewals, relocations, and off-market acquisitions—</span>
<span class="t" id="t73" style="top:804.3px;line-height:25px;font-size:17.6px;font-weight:400;color:#2e2b29;left:1180.5px;letter-spacing:0.198px;">situations where having the right expertise at the table can make all the</span>
<span class="t" id="t74" style="top:830.8px;line-height:25px;font-size:17.6px;font-weight:400;color:#2e2b29;left:1180.5px;letter-spacing:0.295px;">difference in deal outcomes.</span>
<span class="t" id="t75" style="top:882.8px;line-height:25px;font-size:17.6px;font-weight:400;color:#2e2b29;left:1180.5px;letter-spacing:0.228px;">Given your focus in this space, I thought it might be worth a brief</span>
<span class="t" id="t76" style="top:908.8px;line-height:25px;font-size:17.6px;font-weight:400;color:#2e2b29;left:1180.5px;letter-spacing:0.225px;">conversation to explore whether there's a fit for how we support these</span>
<span class="t" id="t77" style="top:934.8px;line-height:25px;font-size:17.6px;font-weight:400;color:#2e2b29;left:1180.5px;letter-spacing:0.441px;">efforts.</span>
<span class="t" id="t78" style="top:987.3px;line-height:25px;font-size:17.6px;font-weight:400;color:#2e2b29;left:1180.5px;letter-spacing:0.173px;">Would you have 10 minutes this week to connect?</span>
<span class="t" id="t79" style="top:1039.3px;line-height:25px;font-size:17.6px;font-weight:400;color:#2e2b29;left:1180.5px;letter-spacing:0.181px;">Best,</span>
<span class="t" id="t80" style="top:1065.8px;line-height:25px;font-size:17.6px;font-weight:400;color:#2e2b29;left:1180.5px;letter-spacing:0.338px;">M Budi Satrio</span>
<div style="left:837px;top:204px;width:80px;height:888px;background:linear-gradient(90deg,rgba(0,0,0,0.04),rgba(0,0,0,0.022) 25%,rgba(0,0,0,0.008) 60%,rgba(0,0,0,0))"></div>
<div style="left:315px;top:204px;width:522px;height:888px;background:#fff"></div>
<span class="t" id="t81" style="top:231.5px;line-height:30px;font-size:21.5px;font-weight:400;color:#1f1d1b;left:341px;letter-spacing:-0.300px;-webkit-text-stroke:0.2px #1f1d1b;">Sequence steps</span>
<svg style="left:782.4px;top:240px;" width="16" height="12" viewBox="0 0 16 12" fill="none" stroke="#1f1d1b" stroke-width="1.5" stroke-linecap="round" stroke-linejoin="round"><path d="M7 2.2 L2.6 6 L7 9.8 M13.4 2.2 L9 6 L13.4 9.8" stroke="#1f1d1b" stroke-width="1.75"/></svg>
<div style="left:315px;top:288px;width:522px;height:1px;background:#eaeae9"></div>
<div style="left:315px;top:298.5px;width:522px;height:200.5px;background:#f7f7f7"></div>
<div style="left:315px;top:499px;width:522px;height:1px;background:#eaeae9"></div>
<div style="left:315px;top:601px;width:522px;height:1px;background:#eaeae9"></div>
<div style="left:315px;top:724px;width:522px;height:1px;background:#eaeae9"></div>
<div style="left:315px;top:809px;width:522px;height:1px;background:#eaeae9"></div>
<div style="left:344.1px;top:323.1px;width:2.8px;height:2.8px;background:#1f1d1b;border-radius:50%"></div>
<div style="left:344.1px;top:329.1px;width:2.8px;height:2.8px;background:#1f1d1b;border-radius:50%"></div>
<div style="left:344.1px;top:335.1px;width:2.8px;height:2.8px;background:#1f1d1b;border-radius:50%"></div>
<div style="left:351.1px;top:323.1px;width:2.8px;height:2.8px;background:#1f1d1b;border-radius:50%"></div>
<div style="left:351.1px;top:329.1px;width:2.8px;height:2.8px;background:#1f1d1b;border-radius:50%"></div>
<div style="left:351.1px;top:335.1px;width:2.8px;height:2.8px;background:#1f1d1b;border-radius:50%"></div>
<div style="left:375px;top:317.8px;width:26px;height:26px;background:#ebebeb;border-radius:7px;box-shadow:0 0 0 1.5px #fff"></div>
<svg style="left:380px;top:323.4px;" width="18" height="16" viewBox="0 0 18 16" fill="none" stroke="#1f1d1b" stroke-width="1.5" stroke-linecap="round" stroke-linejoin="round"><path d="M9 11.4 H2.8 a1.4 1.4 0 0 1 -1.4 -1.4 V3 a1.4 1.4 0 0 1 1.4 -1.4 H13 a1.4 1.4 0 0 1 1.4 1.4 V6.4" stroke="#444" stroke-width="1.1"/><path d="M1.6 2.6 L7.9 7 L14.2 2.6" stroke="#444" stroke-width="1.1"/><circle cx="12.8" cy="10.9" r="4.6" fill="#ebebeb" stroke="none"/><circle cx="12.8" cy="10.9" r="3.7" fill="#3a3836" stroke="none"/><path d="M11.3 12.4 L14.3 9.4" stroke="#ebebeb" stroke-width="1.3"/></svg>
<span class="t" id="t82" style="top:318.5px;line-height:24px;font-size:17.5px;font-weight:400;color:#1f1d1b;left:414px;letter-spacing:0.130px;-webkit-text-stroke:0.4px #1f1d1b;">Step 1: Manual email</span>
<div style="left:759.2px;top:329.9px;width:2.4px;height:2.4px;background:#1f1d1b;border-radius:50%"></div>
<div style="left:765.7px;top:329.9px;width:2.4px;height:2.4px;background:#1f1d1b;border-radius:50%"></div>
<div style="left:772.2px;top:329.9px;width:2.4px;height:2.4px;background:#1f1d1b;border-radius:50%"></div>
<svg style="left:796px;top:326.6px;" width="14" height="9" viewBox="0 0 14 9" fill="none" stroke="#1f1d1b" stroke-width="1.5" stroke-linecap="round" stroke-linejoin="round"><path d="M1.2 8 H12.8 L7 1.4 Z" fill="#1f1d1b" stroke="none"/></svg>
<svg style="left:336px;top:360.5px;" width="18" height="18" viewBox="0 0 18 18" fill="none" stroke="#1f1d1b" stroke-width="1.5" stroke-linecap="round" stroke-linejoin="round"><circle cx="9" cy="9" r="7.6" stroke="#222" stroke-width="1.2"/><path d="M9 4.8 V9.4 L6.4 11" stroke="#222" stroke-width="1.2"/></svg>
<span class="t" id="t83" style="top:357.8px;line-height:25px;font-size:18px;font-weight:400;color:#3f3c39;left:364px;letter-spacing:0.183px;">after 30 minutes</span>
<div style="left:336px;top:395px;width:479.5px;height:46.5px;background:#e9effb;border-radius:10px"></div>
<span class="t" id="t84" style="top:405.5px;line-height:25px;font-size:18px;font-weight:400;color:#1f1d1b;left:346px;letter-spacing:0.016px;-webkit-text-stroke:0.15px #1f1d1b;">Quick note — industrial space in {{contact.cit...</span>
<div style="left:729.5px;top:405px;width:76px;height:26px;background:#e9ebee;border-radius:13px"></div>
<span class="t" id="t85" style="top:406.7px;line-height:21px;font-size:15px;font-weight:400;color:#2e2b29;left:767.5px;transform:translateX(-50%);letter-spacing:0.412px;-webkit-text-stroke:0.25px #2e2b29;">Inactive</span>
<svg style="left:347px;top:452px;" width="20" height="20" viewBox="0 0 20 20" fill="none" stroke="#1f1d1b" stroke-width="1.5" stroke-linecap="round" stroke-linejoin="round"><path d="M10 1.6 V18.4 M1.6 10 H18.4" stroke="#222" stroke-width="1.5"/></svg>
<span class="t" id="t86" style="top:450.0px;line-height:25px;font-size:18px;font-weight:400;color:#1f1d1b;left:375px;letter-spacing:0.578px;-webkit-text-stroke:0.4px #1f1d1b;">Add A/B test</span>
<div style="left:344.1px;top:524.1px;width:2.8px;height:2.8px;background:#1f1d1b;border-radius:50%"></div>
<div style="left:344.1px;top:530.1px;width:2.8px;height:2.8px;background:#1f1d1b;border-radius:50%"></div>
<div style="left:344.1px;top:536.1px;width:2.8px;height:2.8px;background:#1f1d1b;border-radius:50%"></div>
<div style="left:351.1px;top:524.1px;width:2.8px;height:2.8px;background:#1f1d1b;border-radius:50%"></div>
<div style="left:351.1px;top:530.1px;width:2.8px;height:2.8px;background:#1f1d1b;border-radius:50%"></div>
<div style="left:351.1px;top:536.1px;width:2.8px;height:2.8px;background:#1f1d1b;border-radius:50%"></div>
<div style="left:375px;top:519px;width:26px;height:26px;background:#cfe9e5;border-radius:7px"></div>
<svg style="left:380px;top:525.2px;" width="17" height="14" viewBox="0 0 17 14" fill="none" stroke="#1f1d1b" stroke-width="1.5" stroke-linecap="round" stroke-linejoin="round"><rect x="1.2" y="1.2" width="14.6" height="11.2" rx="2" stroke="#2d6f68" stroke-width="1.2"/><path d="M1.8 3.2 L8.5 8 L15.2 3.2" stroke="#2d6f68" stroke-width="1.2"/></svg>
<span class="t" id="t87" style="top:519.5px;line-height:24px;font-size:17.5px;font-weight:400;color:#1f1d1b;left:414px;letter-spacing:0.441px;-webkit-text-stroke:0.4px #1f1d1b;">Step 2: Automatic email</span>
<div style="left:759.2px;top:530.9px;width:2.4px;height:2.4px;background:#1f1d1b;border-radius:50%"></div>
<div style="left:765.7px;top:530.9px;width:2.4px;height:2.4px;background:#1f1d1b;border-radius:50%"></div>
<div style="left:772.2px;top:530.9px;width:2.4px;height:2.4px;background:#1f1d1b;border-radius:50%"></div>
<svg style="left:796px;top:527.6px;" width="14" height="9" viewBox="0 0 14 9" fill="none" stroke="#1f1d1b" stroke-width="1.5" stroke-linecap="round" stroke-linejoin="round"><path d="M1.2 1.2 H12.8 L7 7.8 Z" fill="#1f1d1b" stroke="none"/></svg>
<svg style="left:336px;top:561.5px;" width="18" height="18" viewBox="0 0 18 18" fill="none" stroke="#1f1d1b" stroke-width="1.5" stroke-linecap="round" stroke-linejoin="round"><circle cx="9" cy="9" r="7.6" stroke="#222" stroke-width="1.2"/><path d="M9 4.8 V9.4 L6.4 11" stroke="#222" stroke-width="1.2"/></svg>
<span class="t" id="t88" style="top:558.8px;line-height:25px;font-size:18px;font-weight:400;color:#3f3c39;left:364px;letter-spacing:-0.088px;">after 3 days</span>
<div style="left:344.1px;top:636.1px;width:2.8px;height:2.8px;background:#1f1d1b;border-radius:50%"></div>
<div style="left:344.1px;top:642.1px;width:2.8px;height:2.8px;background:#1f1d1b;border-radius:50%"></div>
<div style="left:344.1px;top:648.1px;width:2.8px;height:2.8px;background:#1f1d1b;border-radius:50%"></div>
<div style="left:351.1px;top:636.1px;width:2.8px;height:2.8px;background:#1f1d1b;border-radius:50%"></div>
<div style="left:351.1px;top:642.1px;width:2.8px;height:2.8px;background:#1f1d1b;border-radius:50%"></div>
<div style="left:351.1px;top:648.1px;width:2.8px;height:2.8px;background:#1f1d1b;border-radius:50%"></div>
<div style="left:375px;top:631.2px;width:26px;height:26px;background:#cfe4f8;border-radius:7px"></div>
<svg style="left:380px;top:636.3px;" width="17" height="16" viewBox="0 0 17 16" fill="none" stroke="#1f1d1b" stroke-width="1.5" stroke-linecap="round" stroke-linejoin="round"><rect x="1.2" y="4.4" width="14.6" height="10.2" rx="2" stroke="#2b78c2" stroke-width="1.2"/><path d="M5.6 4.2 V3 a1.6 1.6 0 0 1 1.6 -1.6 H9.8 a1.6 1.6 0 0 1 1.6 1.6 V4.2" stroke="#2b78c2" stroke-width="1.2"/><path d="M1.4 9.2 H15.6 M7 9.2 V10.8 H10 V9.2" stroke="#2b78c2" stroke-width="1.1"/></svg>
<span class="t" id="t89" style="top:618.5px;line-height:24px;font-size:17.5px;font-weight:400;color:#1f1d1b;left:414px;letter-spacing:0.397px;-webkit-text-stroke:0.4px #1f1d1b;">Step 3: LinkedIn - send connection</span>
<span class="t" id="t90" style="top:645.0px;line-height:24px;font-size:17.5px;font-weight:400;color:#1f1d1b;left:414px;letter-spacing:0.661px;-webkit-text-stroke:0.4px #1f1d1b;">request</span>
<div style="left:759.2px;top:642.9px;width:2.4px;height:2.4px;background:#1f1d1b;border-radius:50%"></div>
<div style="left:765.7px;top:642.9px;width:2.4px;height:2.4px;background:#1f1d1b;border-radius:50%"></div>
<div style="left:772.2px;top:642.9px;width:2.4px;height:2.4px;background:#1f1d1b;border-radius:50%"></div>
<svg style="left:796px;top:639.6px;" width="14" height="9" viewBox="0 0 14 9" fill="none" stroke="#1f1d1b" stroke-width="1.5" stroke-linecap="round" stroke-linejoin="round"><path d="M1.2 1.2 H12.8 L7 7.8 Z" fill="#1f1d1b" stroke="none"/></svg>
<svg style="left:336px;top:684.5px;" width="18" height="18" viewBox="0 0 18 18" fill="none" stroke="#1f1d1b" stroke-width="1.5" stroke-linecap="round" stroke-linejoin="round"><circle cx="9" cy="9" r="7.6" stroke="#222" stroke-width="1.2"/><path d="M9 4.8 V9.4 L6.4 11" stroke="#222" stroke-width="1.2"/></svg>
<span class="t" id="t91" style="top:681.8px;line-height:25px;font-size:18px;font-weight:400;color:#3f3c39;left:364px;letter-spacing:-0.088px;">after 3 days</span>
<div style="left:340.8px;top:746px;width:108.2px;height:41.4px;border:1.4px solid #d3d1ce;border-radius:10.5px;background:#fff"></div>
<span class="t" id="t92" style="top:754.5px;line-height:25px;font-size:18px;font-weight:400;color:#1f1d1b;left:395px;transform:translateX(-50%);letter-spacing:0.194px;-webkit-text-stroke:0.4px #1f1d1b;">Add a step</span>
<div style="left:1841.6px;top:1013.4px;width:62.8px;height:62.8px;background:#000;border-radius:50%;box-shadow:0 3px 16px rgba(0,0,0,0.16)"></div>
<span class="t" id="t93" style="top:1011.8px;line-height:62px;font-size:44px;font-weight:400;color:#fff;left:1873px;transform:translateX(-50%);-webkit-text-stroke:1px #fff;">?</span>
</body></html>
